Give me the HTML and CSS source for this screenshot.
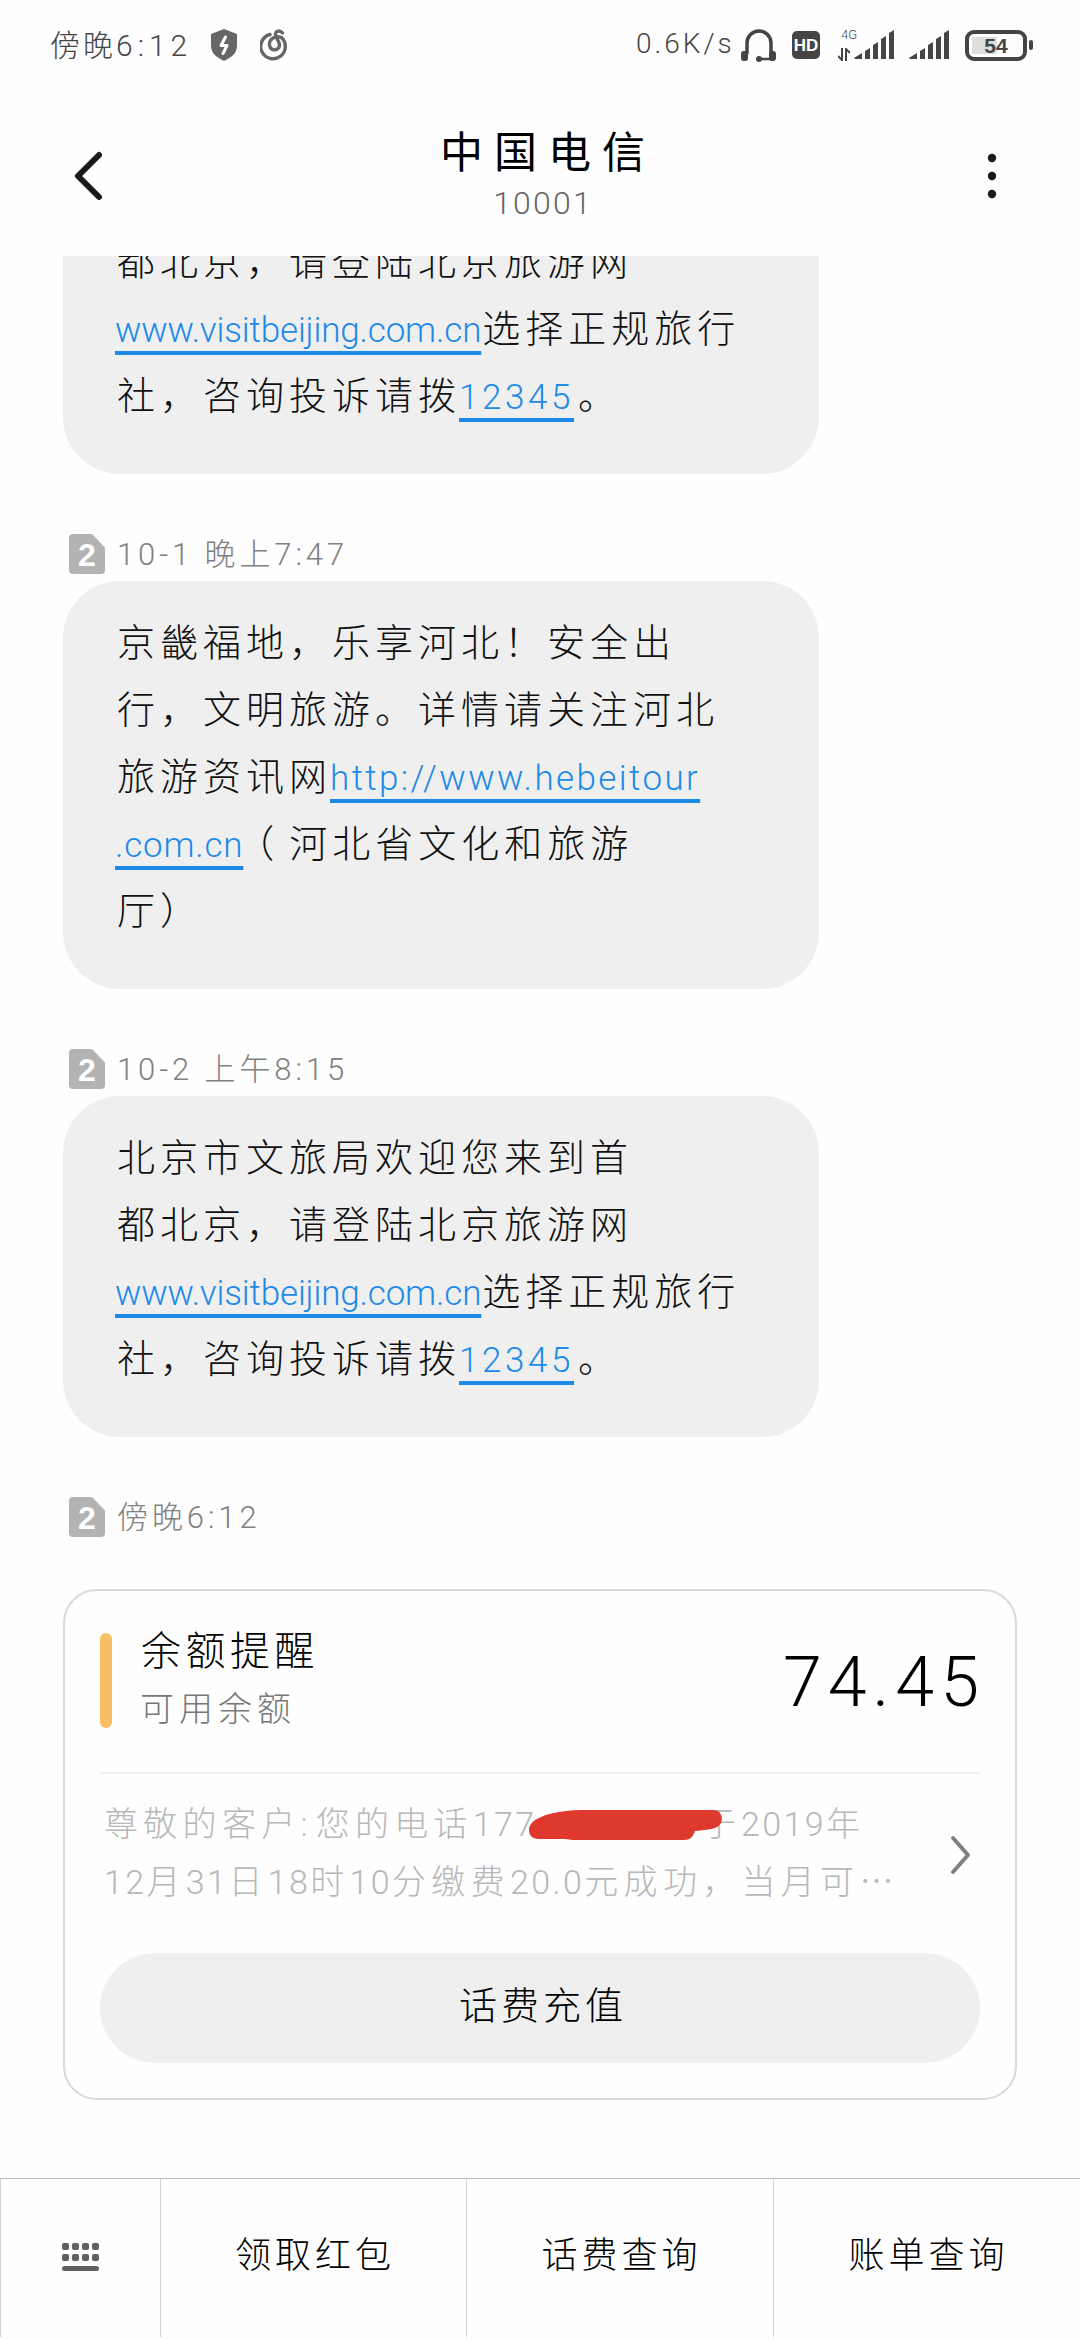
FILE: index.html
```html
<!DOCTYPE html>
<html lang="zh-CN">

<head>
    <meta charset="UTF-8">
    <meta name="viewport" content="width=device-width, initial-scale=1.0">
    <title>中国电信</title>
    <link rel="stylesheet" href="styles.css">
</head>

<body>
    <!-- Status bar -->
    <div class="status">
        <div class="status__time">傍晚<span class="num">6:12</span></div>
        <svg class="status__shield" width="28" height="32" viewBox="0 0 28 32">
            <path d="M14 0 L27 5 V17 C27 25 20 29 14 32 C8 29 1 25 1 17 V5 Z" fill="#666" />
            <path d="M15.500 8 L11 16.500 H17 L13 24.500" fill="none" stroke="#fff" stroke-width="3" stroke-linecap="round" stroke-linejoin="round" />
        </svg>
        <svg class="status__music" width="30" height="32" viewBox="0 0 30 32" fill="none" stroke="#666" stroke-width="3.4" stroke-linecap="round">
            <path d="M10 5.500 A12.300 12.300 0 1 0 21.500 8.500 C15 6 9 10 9.500 16 C10.500 22.500 19 22.500 19.500 16 C19.500 12 15 8 15.500 5 C16 1.500 20 1 22.500 4" />
        </svg>
        <div class="status__speed">0.6K/s</div>
        <svg class="status__headset" width="36" height="33" viewBox="0 0 36 33">
            <path d="M6 25 V14 A12 12 0 0 1 30 14 V25" fill="none" stroke="#444" stroke-width="3.500" />
            <rect x="0" y="22" width="7" height="10" rx="3" fill="#444" />
            <rect x="28" y="22" width="7" height="10" rx="3" fill="#444" />
            <path d="M19 30 H31" stroke="#444" stroke-width="2.500" />
            <circle cx="18" cy="30" r="3" fill="#444" />
        </svg>
        <div class="status__hd">HD</div>
        <div class="status__net">
            <span>4G</span>
            <svg width="12" height="13" viewBox="0 0 12 13" fill="none" stroke="#444" stroke-width="2">
                <path d="M4 0 V12 L0 8 M8 13 V1 L12 5" />
            </svg>
        </div>
        <svg class="status__signal" width="41" height="30" viewBox="0 0 41 30" fill="#444">
            <path d="M0 28 L8 23 V29 H1 Z M11 21 L16 18 V29 H11 Z M19 15 L24 12 V29 H19 Z M27 9 L32 6 V29 H27 Z M35 3 L40 0 V29 H35 Z" />
        </svg>
        <svg class="status__signal status__signal--second" width="41" height="30" viewBox="0 0 41 30" fill="#444">
            <path d="M0 28 L8 23 V29 H1 Z M11 21 L16 18 V29 H11 Z M19 15 L24 12 V29 H19 Z M27 9 L32 6 V29 H27 Z M35 3 L40 0 V29 H35 Z" />
        </svg>
        <div class="battery">54</div>
    </div>

    <!-- Conversation header -->
    <header>
        <svg width="30" height="50" viewBox="0 0 30 50" fill="none" stroke="#1a1a1a" stroke-width="6" stroke-linecap="round" stroke-linejoin="round">
            <path d="M26 4 L5 25 L26 46" />
        </svg>
        <div class="contact">
            <h1>中国电信</h1>
            <p>10001</p>
        </div>
        <svg width="10" height="46" viewBox="0 0 10 46" fill="#1a1a1a">
            <circle cx="5" cy="5" r="4.200" />
            <circle cx="5" cy="23" r="4.200" />
            <circle cx="5" cy="41" r="4.200" />
        </svg>
    </header>

    <!-- Messages -->
    <main>
        <div class="bubble bubble--cut">
            <p>都北京，请登陆北京旅游网</p>
            <p><a class="url-visit">www.visitbeijing.com.cn</a>选择正规旅行</p>
            <p>社，咨询投诉请拨<a class="tel">12345</a>。</p>
        </div>

        <div class="stamp">
            <span class="sim">2</span>
            <span class="stamp__time">10-1 晚上7:47</span>
        </div>
        <div class="bubble">
            <p>京畿福地，乐享河北！安全出</p>
            <p>行，文明旅游。详情请关注河北</p>
            <p>旅游资讯网<a class="url-hebei">http://www.hebeitour</a></p>
            <p><a class="url-hebei-end">.com.cn</a><span class="paren">（</span>河北省文化和旅游</p>
            <p>厅）</p>
        </div>

        <div class="stamp">
            <span class="sim">2</span>
            <span class="stamp__time">10-2 上午8:15</span>
        </div>
        <div class="bubble">
            <p>北京市文旅局欢迎您来到首</p>
            <p>都北京，请登陆北京旅游网</p>
            <p><a class="url-visit">www.visitbeijing.com.cn</a>选择正规旅行</p>
            <p>社，咨询投诉请拨<a class="tel">12345</a>。</p>
        </div>

        <div class="stamp">
            <span class="sim">2</span>
            <span class="stamp__time">傍晚6:12</span>
        </div>

        <!-- Balance card -->
        <section class="card">
            <div class="card__top">
                <div class="card__title">
                    <h2>余额提醒</h2>
                    <p>可用余额</p>
                </div>
                <div class="card__amount">74.45</div>
            </div>
            <div class="card__body">
                <div class="card__text">
                    <p>尊敬的客户<span class="colon">:</span>您的电话<span class="num">177</span><span class="redacted"><svg width="198" height="32" viewBox="0 0 198 32"><path d="M2 21 C2 9 24 1 60 1 H186 C196 1 198 14 190 18 C184 21 176 21 168 22 C166 28 163 31 157 31 H45 L39 30 H12 C5 30 2 26 2 21 Z" fill="#df382c" /></svg></span>于<span class="num">2019</span>年</p>
                    <p><span class="num">12</span>月<span class="num">31</span>日<span class="num">18</span>时<span class="num">10</span>分缴费<span class="num">20.0</span>元成功，当月可<span class="dots">…</span></p>
                </div>
                <svg width="22" height="40" viewBox="0 0 22 40" fill="none" stroke="#808080" stroke-width="4" stroke-linecap="round" stroke-linejoin="round">
                    <path d="M3 3 L18 20 L3 37" />
                </svg>
            </div>
            <div class="card__button">话费充值</div>
        </section>
    </main>

    <!-- Bottom menu -->
    <nav>
        <div class="nav__keys">
            <svg width="38" height="30" viewBox="0 0 38 30" fill="#606060">
                <rect x="0" y="0" width="7" height="7" rx="2" />
                <rect x="10" y="0" width="7" height="7" rx="2" />
                <rect x="20" y="0" width="7" height="7" rx="2" />
                <rect x="30" y="0" width="7" height="7" rx="2" />
                <rect x="0" y="11" width="7" height="7" rx="2" />
                <rect x="10" y="11" width="7" height="7" rx="2" />
                <rect x="20" y="11" width="7" height="7" rx="2" />
                <rect x="30" y="11" width="7" height="7" rx="2" />
                <rect x="0" y="23" width="37" height="5" rx="2.500" />
            </svg>
        </div>
        <div>领取红包</div>
        <div>话费查询</div>
        <div>账单查询</div>
    </nav>
</body>

</html>
```
FILE: styles.css
```css
* {
    box-sizing: border-box;
}

body {
    display: flex;
    flex-direction: column;
    width: 1080px;
    height: 2340px;
    margin: 0;
    overflow: hidden;
    background-color: #fefefe;
    color: #111;
    font-family: Roboto, "Noto Sans CJK SC", sans-serif;
    font-weight: 300;
    white-space: nowrap;
}

h1, h2, p {
    margin: 0;
    font-weight: 300;
}

svg {
    display: block;
    flex: none;
}

.status {
    display: flex;
    align-items: center;
    height: 90px;
    padding-left: 50px;
    color: #444;
}

.status__time {
    width: 160px;
    margin-top: -4px;
    font-size: 30px;
    letter-spacing: 3px;
}

.status__time .num {
    letter-spacing: 5px;
}

.status__shield {
    margin-right: 22px;
}

.status__speed {
    width: 105px;
    margin-top: -4px;
    margin-left: 346px;
    font-size: 28px;
    letter-spacing: 3px;
}

.status__headset {
    margin-right: 15px;
}

.status__hd {
    width: 28px;
    height: 28px;
    border-radius: 5px;
    background-color: #444;
    color: #fff;
    font: 700 17px/29px "Liberation Sans", sans-serif;
    text-align: center;
}

.status__net {
    width: 34px;
    height: 34px;
    padding-left: 18px;
    font-size: 13px;
    line-height: 14px;
}

.status__net span {
    padding-left: 3px;
}

.status__net svg {
    margin-top: 6px;
}

.status__signal--second {
    margin: 0 15px 0 14px;
}

/* battery level is the grey block behind the number */
.battery {
    position: relative;
    width: 62px;
    height: 31px;
    border: 4px solid #444;
    border-radius: 9px;
    background: linear-gradient(#dedede, #dedede) 3px 3px / 25px 17px no-repeat;
    font: 700 21px/23px "Liberation Sans", sans-serif;
    text-align: center;
}

.battery::after {
    content: "";
    position: absolute;
    top: 6px;
    right: -10px;
    width: 4px;
    height: 10px;
    border-radius: 2px;
    background-color: #444;
}

header {
    display: flex;
    align-items: center;
    justify-content: space-between;
    height: 166px;
    padding: 6px 83px 0 73px;
}

.contact {
    margin-top: -6px;
    padding-left: 6px;
    text-align: center;
}

.contact h1 {
    color: #000;
    font-size: 43px;
    font-weight: 400;
    line-height: 60px;
    letter-spacing: 11px;
}

.contact p {
    margin-left: -10px;
    color: #666;
    font-size: 32px;
    line-height: 40px;
    letter-spacing: 2.2px;
}

main {
    display: flex;
    flex-direction: column;
    height: 1922px;
    overflow: hidden;
    padding-left: 63px;
}

.bubble {
    flex: none;
    width: 756px;
    padding: 29px 0 44px 54px;
    border-radius: 57px;
    background-color: #efefef;
    font-size: 38px;
    line-height: 67px;
    letter-spacing: 5px;
}

/* first message is scrolled under the header */
.bubble--cut {
    margin-top: -27px;
    padding-top: 0;
    border-radius: 0 0 57px 57px;
}

.bubble p {
    height: 67px;
}

.bubble a {
    margin-left: -2px;
    margin-right: 1px;
    color: #1e8ae8;
    font-size: 35px;
    text-decoration: underline 4px;
    text-underline-offset: 9px;
    text-decoration-skip-ink: none;
}

.bubble .url-visit {
    letter-spacing: -0.15px;
}

.bubble .url-hebei {
    letter-spacing: 2.4px;
}

.bubble .url-hebei-end {
    letter-spacing: 0.8px;
}

.bubble .tel {
    margin-right: 4px;
    letter-spacing: 3.6px;
}

.paren {
    margin-left: -8px;
    margin-right: 10px;
}

.stamp {
    display: flex;
    align-items: center;
    gap: 12px;
    flex: none;
    height: 40px;
    margin: 60px 0 7px 6px;
    color: #808080;
    font-size: 31px;
    letter-spacing: 3.9px;
}

.stamp__time {
    margin-top: -6px;
}

.sim {
    width: 36px;
    height: 40px;
    border-radius: 4px;
    background-color: #b3b3b3;
    clip-path: polygon(0 0, 64% 0, 100% 34%, 100% 100%, 0 100%);
    color: #fff;
    font: 700 32px/43px "Liberation Sans", sans-serif;
    letter-spacing: 0;
    text-align: center;
}

.card {
    flex: none;
    width: 954px;
    height: 511px;
    margin-top: 45px;
    padding: 0 35px;
    border: 2px solid #d9d9d9;
    border-radius: 34px;
}

.card__top {
    display: flex;
    align-items: center;
    justify-content: space-between;
    height: 183px;
    border-bottom: 2px solid #f0f0f0;
}

.card__title {
    position: relative;
    display: flex;
    flex-direction: column;
    justify-content: space-between;
    height: 95px;
    margin-top: -2px;
    padding-left: 41px;
}

.card__title::before {
    content: "";
    position: absolute;
    top: 0;
    left: 0;
    width: 12px;
    height: 95px;
    border-radius: 6px;
    background-color: #f8be65;
}

.card__title h2 {
    color: #000;
    font-size: 40px;
    line-height: 38px;
    letter-spacing: 4.5px;
}

.card__title p {
    margin-left: -1px;
    color: #777;
    font-size: 34px;
    line-height: 38px;
    letter-spacing: 5px;
}

.card__amount {
    margin-right: -5px;
    color: #000;
    font-size: 70px;
    letter-spacing: 6px;
}

.card__body {
    display: flex;
    justify-content: space-between;
    align-items: center;
    height: 179px;
    padding: 0 8px 17px 4px;
}

.card__text {
    margin-top: -4px;
    color: #b8b8b8;
    font-size: 34px;
    line-height: 56px;
    letter-spacing: 5.3px;
}

.card__text .num {
    letter-spacing: 2.4px;
}

.card__text .colon {
    letter-spacing: 8px;
}

.card__text .dots {
    font-family: "Noto Sans CJK SC", sans-serif;
}

.redacted {
    display: inline-block;
    position: relative;
    width: 165px;
    height: 20px;
}

.redacted svg {
    position: absolute;
    top: -7px;
    left: -10px;
}

.card__button {
    height: 110px;
    padding-left: 6px;
    border-radius: 55px;
    background-color: #efefef;
    color: #000;
    font-size: 38px;
    line-height: 106px;
    letter-spacing: 4px;
    text-align: center;
}

nav {
    display: grid;
    grid-template-columns: 161px 306px 307px 306px;
    height: 162px;
    border-top: 1px solid #bbb;
    color: #000;
    font-size: 36px;
    line-height: 154px;
    letter-spacing: 4px;
    text-align: center;
}

nav div {
    height: 158px;
    padding-left: 3px;
    border-right: 1px solid #d2d2d2;
}

nav div:last-child {
    border-right: none;
}

.nav__keys {
    display: flex;
    align-items: center;
    justify-content: center;
    padding-left: 0;
    border-left: 1px solid #d2d2d2;
}
```
